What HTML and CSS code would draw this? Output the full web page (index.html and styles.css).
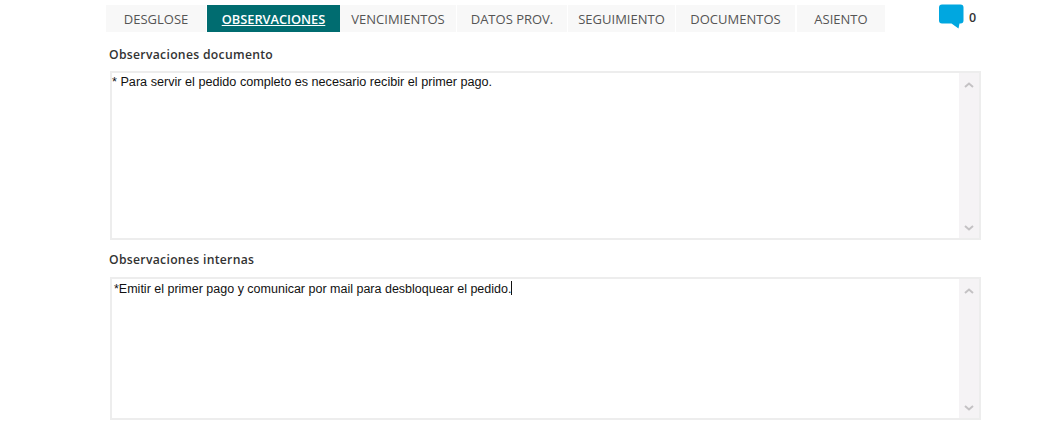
FILE: index.html
```html
<!DOCTYPE html>
<html lang="en">
<head>
    <meta charset="UTF-8">
    <title>Observaciones</title>
    <link rel="stylesheet" href="styles.css">
</head>
<body>
    <div class="topbar">
        <nav class="tabs">
            <a class="tab tab-desglose">DESGLOSE</a>
            <a class="tab tab-obs active">OBSERVACIONES</a>
            <a class="tab tab-venc">VENCIMIENTOS</a>
            <a class="tab tab-datos">DATOS PROV.</a>
            <a class="tab tab-seg">SEGUIMIENTO</a>
            <a class="tab tab-doc">DOCUMENTOS</a>
            <a class="tab tab-asiento">ASIENTO</a>
        </nav>
        <div class="comments">
            <svg class="comment-icon" width="26" height="25" viewBox="0 0 26 25">
                <path d="M4 0.5H22.5Q25.5 0.5 25.5 3.5V16.5Q25.5 19.5 22.5 19.5H21.5L20.5 24.5L13.5 19.5H4Q1 19.5 1 16.5V3.5Q1 0.5 4 0.5Z" fill="#00a7e0"/>
            </svg>
            <span class="comment-count">0</span>
        </div>
    </div>

    <section class="field field-doc">
        <h2>Observaciones documento</h2>
        <div class="box">
            <p class="box-text">* Para servir el pedido completo es necesario recibir el primer pago.</p>
            <div class="scroll">
                <svg width="10" height="6" viewBox="0 0 10 6"><path d="M1 5L5 1.5L9 5" fill="none" stroke="#c4c2c4" stroke-width="2"/></svg>
                <svg width="10" height="6" viewBox="0 0 10 6"><path d="M1 1L5 4.5L9 1" fill="none" stroke="#c4c2c4" stroke-width="2"/></svg>
            </div>
        </div>
    </section>

    <section class="field field-int">
        <h2>Observaciones internas</h2>
        <div class="box">
            <p class="box-text box-text-int">*Emitir el primer pago y comunicar por mail para desbloquear el pedido.<span class="caret"></span></p>
            <div class="scroll">
                <svg width="10" height="6" viewBox="0 0 10 6"><path d="M1 5L5 1.5L9 5" fill="none" stroke="#c4c2c4" stroke-width="2"/></svg>
                <svg width="10" height="6" viewBox="0 0 10 6"><path d="M1 1L5 4.5L9 1" fill="none" stroke="#c4c2c4" stroke-width="2"/></svg>
            </div>
        </div>
    </section>
</body>
</html>
```

FILE: styles.css
```css
body {
    margin: 0;
    height: 421px;
    overflow: hidden;
    background: #fff;
    color: #2b2b2b;
    font-family: "Open Sans", sans-serif;
}
.topbar {
    display: flex;
    align-items: flex-start;
    padding: 4px 0 0 106px;
    height: 33px;
    box-sizing: border-box;
}
.tabs {
    display: flex;
    gap: 1px;
    margin-top: 1px;
    width: 779px;
    flex-shrink: 0;
}
.tab {
    flex-shrink: 0;
    height: 27px;
    line-height: 28px;
    text-align: center;
    background: #f8f8f8;
    color: #555;
    font-size: 13px;
    box-sizing: border-box;
}
.tab-desglose { width: 100px; }
.tab-obs { width: 133px; }
.tab-venc { width: 116px; margin-left: -1px; }
.tab-datos { width: 110px; }
.tab-seg { width: 107px; }
.tab-doc { width: 119px; }
.tab-asiento { width: 88px; margin-left: 1px; }
.tab.active {
    background: #006c70;
    color: #fff;
    font-weight: 600;
    font-size: 12.8px;
    text-decoration: underline;
}
.comments {
    display: flex;
    align-items: flex-start;
    margin-left: 53px;
    gap: 5px;
}
.comment-icon {
    display: block;
}
.comment-count {
    font-size: 12.5px;
    font-weight: 600;
    line-height: 28px;
    color: #333;
}
.field h2 {
    margin: 0;
    padding-left: 109px;
    font-size: 12.2px;
    font-weight: 600;
    line-height: 16px;
    color: #333;
    letter-spacing: 0.3px;
}
.field-doc {
    padding-top: 14px;
}
.field-doc .box {
    margin-top: 8px;
    height: 169px;
}
.field-int {
    padding-top: 12px;
}
.field-int .box {
    margin-top: 9px;
    height: 143px;
}
.box {
    display: flex;
    justify-content: space-between;
    box-sizing: border-box;
    width: 871px;
    margin-left: 110px;
    border: 2px solid #ededed;
}
.box-text {
    margin: 0;
    padding: 2px 0 0;
    font-family: "Liberation Sans", sans-serif;
    font-size: 12.65px;
    line-height: 15px;
    color: #111;
}
.box-text-int {
    padding-left: 2px;
    font-size: 12.5px;
}
.caret {
    display: inline-block;
    width: 1px;
    height: 14px;
    background: #111;
    vertical-align: -2px;
}
.scroll {
    display: flex;
    flex-direction: column;
    justify-content: space-between;
    align-items: center;
    width: 20px;
    padding: 9px 0 7px;
    background: #f5f3f5;
    box-sizing: border-box;
}
.scroll svg {
    display: block;
}
```
